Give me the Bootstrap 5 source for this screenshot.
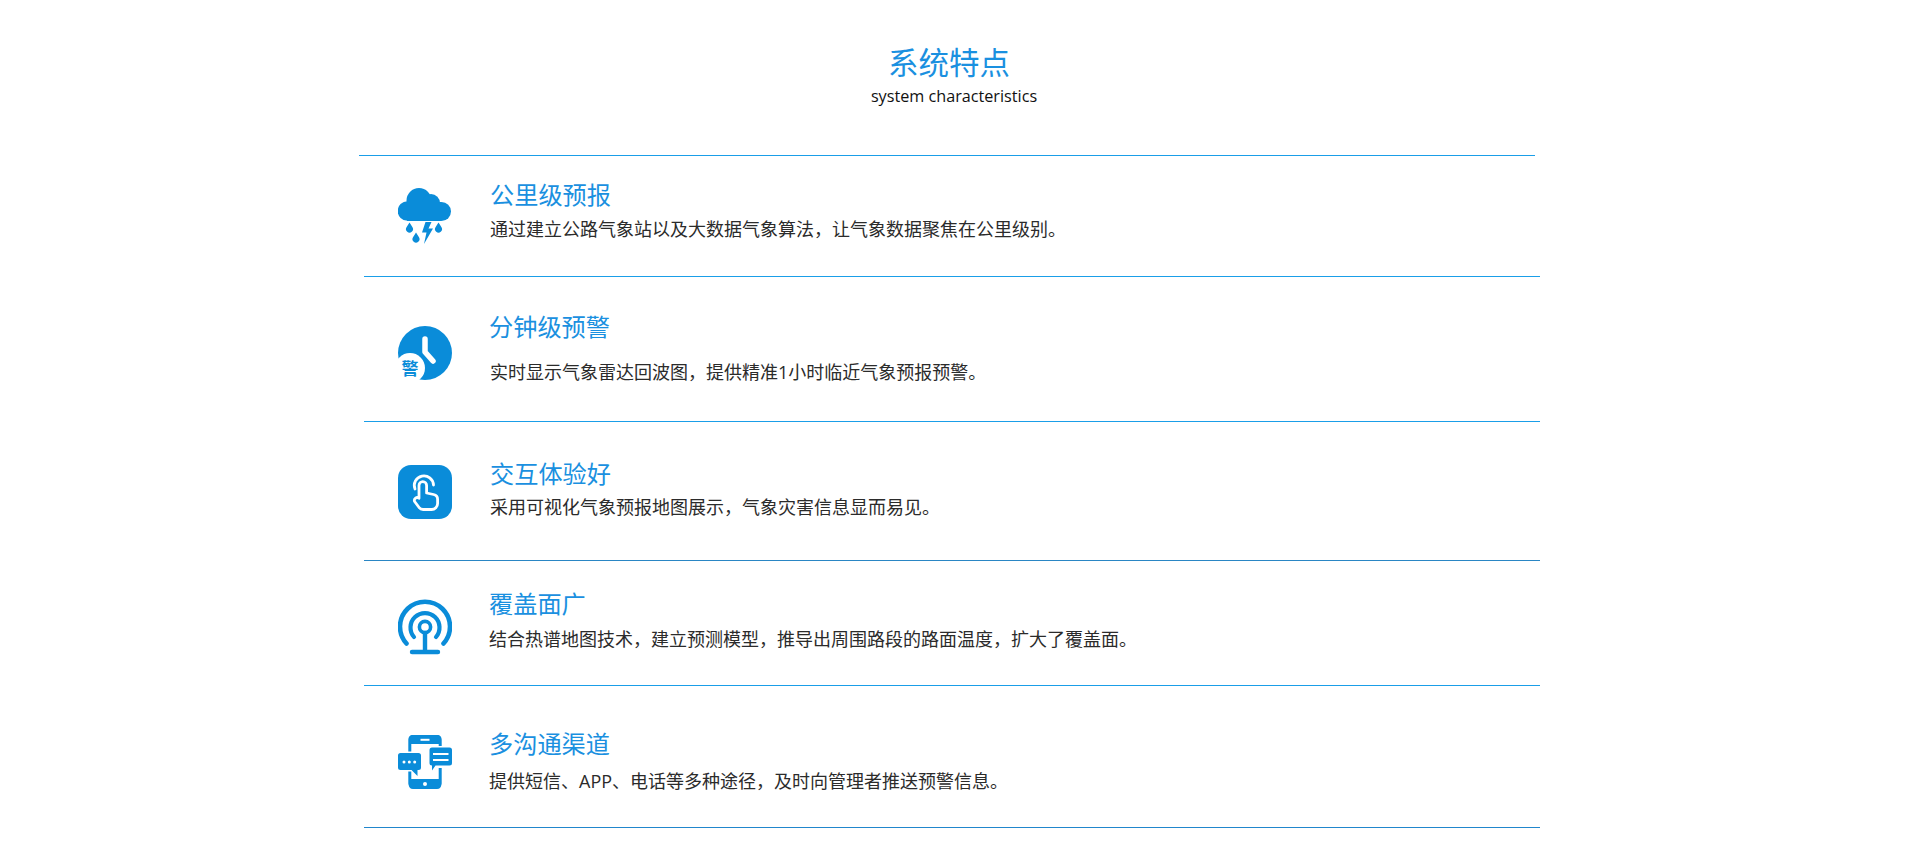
<!DOCTYPE html>
<html lang="zh-CN">
<head>
<meta charset="utf-8">
<title>系统特点</title>
<link rel="stylesheet" href="https://cdn.jsdelivr.net/npm/bootstrap@5.3.0/dist/css/bootstrap.min.css">
<style>
html,body{background:#fff;overflow:hidden;height:844px}
body{font-family:"Open Sans","Noto Sans CJK SC",sans-serif;color:#333}
.intro{height:155px;padding-top:43px;width:1176px;margin-left:366px}
.intro-title{font-size:30.5px;line-height:38px;font-weight:400;color:#1a90e0;margin:0;padding-right:10px}
.intro-sub{font-size:16.2px;line-height:22px;color:#111;margin:4px 0 0}
.feature-list{width:1176px;margin-left:364px}
.top-rule{width:1176px;margin-left:-5px;height:1px;background:#1a9ee8}
.feature{border-bottom:1px solid #1a9ee8;width:1176px}
.feature-icon{width:54px;flex:none;margin-left:34px;margin-right:38px;color:#0a8cd9}
.feature-icon svg{display:block;width:54px}
.feature-title{font-size:24.2px;line-height:32px;font-weight:400;color:#1a90e0;margin:0}
.feature-desc{font-size:18px;line-height:24px;margin:0;color:#2b2b2b;white-space:nowrap}
.f1{height:121px;padding-top:32px}
.f1 .feature-title{margin-top:-9px}.f1 .feature-desc{margin-top:6px}
.f2{height:145px;padding-top:49px}
.f2 .feature-title{margin-top:-15px;margin-left:-1px}.f2 .feature-desc{margin-top:17px}
.f3{height:139px;padding-top:43px;border-bottom-color:#2a86c4}
.f3 .feature-title{margin-top:-7px}.f3 .feature-desc{margin-top:5px}
.f4{height:125px;padding-top:38px}
.f4 .feature-title{margin-top:-11px;margin-left:-1px}.f4 .feature-desc{margin-top:7px;margin-left:-1px}
.f5{height:142px;padding-top:49px;border-bottom-color:#2186cc}
.f5 .feature-title{margin-top:-7px;margin-left:-1px}.f5 .feature-desc{margin-top:9px;margin-left:-1px}
</style>
</head>
<body>
<header class="intro text-center">
  <h1 class="intro-title">系统特点</h1>
  <p class="intro-sub">system characteristics</p>
</header>
<main class="feature-list">
  <div class="top-rule"></div>
  <section class="feature f1 d-flex align-items-start">
    <div class="feature-icon">
      <svg viewBox="0 0 54 56" height="56" fill="currentColor" aria-hidden="true">
        <circle cx="9.5" cy="23" r="9.8"/><circle cx="21" cy="12.500" r="12.500"/><circle cx="33" cy="15" r="9"/><circle cx="43.500" cy="23.500" r="9.500"/>
        <rect x="9" y="14" width="34" height="19"/>
        <path d="M11.500 34.500l3 4.800a3.500 3.500 0 1 1-6 0z"/><path d="M40.500 34.500l3 4.800a3.500 3.500 0 1 1-6 0z"/><path d="M18 44.500l3 4.800a3.500 3.500 0 1 1-6 0z"/>
        <path d="M27.500 34h6l-3 6.500h4.500L26 56l2.500-11.500H24z"/>
      </svg>
    </div>
    <div>
      <h2 class="feature-title">公里级预报</h2>
      <p class="feature-desc">通过建立公路气象站以及大数据气象算法，让气象数据聚焦在公里级别。</p>
    </div>
  </section>
  <section class="feature f2 d-flex align-items-start">
    <div class="feature-icon">
      <svg viewBox="0 0 54 54" height="54" aria-hidden="true">
        <circle cx="27" cy="27" r="27" fill="currentColor"/>
        <path d="M27 13v13l8 9" fill="none" stroke="#fff" stroke-width="5.500" stroke-linecap="round" stroke-linejoin="round"/>
        <circle cx="12" cy="42" r="15" fill="#fff"/>
        <text x="12" y="48.500" text-anchor="middle" font-size="17" font-weight="700" fill="currentColor" font-family="'Noto Sans CJK SC',sans-serif">警</text>
      </svg>
    </div>
    <div>
      <h2 class="feature-title">分钟级预警</h2>
      <p class="feature-desc">实时显示气象雷达回波图，提供精准1小时临近气象预报预警。</p>
    </div>
  </section>
  <section class="feature f3 d-flex align-items-start">
    <div class="feature-icon">
      <svg viewBox="0 0 54 54" height="54" aria-hidden="true">
        <rect width="54" height="54" rx="13" fill="currentColor"/>
        <g fill="none" stroke="#fff" stroke-width="2.800" stroke-linecap="round" stroke-linejoin="round">
          <path d="M17 24a9.600 9.600 0 1 1 18.500-4"/>
          <path d="M21 33V20.500a3.800 3.800 0 0 1 7.600 0V28l7 1.500a5 5 0 0 1 4 5v4a6 6 0 0 1-6 6h-8.500a5 5 0 0 1-4-2l-4.500-6a2.800 2.800 0 0 1 4.400-3.200z"/>
        </g>
      </svg>
    </div>
    <div>
      <h2 class="feature-title">交互体验好</h2>
      <p class="feature-desc">采用可视化气象预报地图展示，气象灾害信息显而易见。</p>
    </div>
  </section>
  <section class="feature f4 d-flex align-items-start">
    <div class="feature-icon">
      <svg viewBox="0 0 54 56" height="56" aria-hidden="true">
        <g fill="none" stroke="currentColor" stroke-linecap="round">
          <path d="M8.500 44.500a25 25 0 1 1 37 0" stroke-width="4.600"/>
          <path d="M16 38a14.500 14.500 0 1 1 22 0" stroke-width="4.200"/>
          <circle cx="27" cy="28" r="5.600" stroke-width="3.600"/>
          <path d="M27 34v18M14 53h26" stroke-width="4.400"/>
        </g>
      </svg>
    </div>
    <div>
      <h2 class="feature-title">覆盖面广</h2>
      <p class="feature-desc">结合热谱地图技术，建立预测模型，推导出周围路段的路面温度，扩大了覆盖面。</p>
    </div>
  </section>
  <section class="feature f5 d-flex align-items-start">
    <div class="feature-icon">
      <svg viewBox="0 0 54 54" height="54" aria-hidden="true">
        <rect x="11.800" y="1.500" width="30.400" height="50" rx="3" fill="none" stroke="currentColor" stroke-width="3"/>
        <path d="M11 4a4 4 0 0 1 4-4h24a4 4 0 0 1 4 4v5H11zM11 44h32v6a4 4 0 0 1-4 4H15a4 4 0 0 1-4-4z" fill="currentColor"/>
        <rect x="22.500" y="3.800" width="9" height="2" fill="#fff"/>
        <circle cx="27" cy="49" r="2" fill="#fff"/>
        <path d="M2 16.500h20a2.500 2.500 0 0 1 2.500 2.500v15a2.500 2.500 0 0 1-2.500 2.500h-1.500V43l-6-6.500H2A3 3 0 0 1-1 34V19a3 3 0 0 1 3-2.500z" fill="#fff"/>
        <path d="M2.500 18h18a2.500 2.500 0 0 1 2.500 2.500v12a2.500 2.500 0 0 1-2.500 2.500h-1v6l-6-6h-11A2.500 2.500 0 0 1 0 32.500v-12A2.500 2.500 0 0 1 2.500 18z" fill="currentColor"/>
        <circle cx="6" cy="27" r="1.500" fill="#fff"/><circle cx="11.300" cy="27" r="1.500" fill="#fff"/><circle cx="16.700" cy="27" r="1.500" fill="#fff"/>
        <path d="M32 11h21v22H38l-5 5v-5h-3V11z" fill="#fff"/>
        <path d="M34 12.500h17.500a2.500 2.500 0 0 1 2.500 2.500v13a2.500 2.500 0 0 1-2.500 2.500H37.500l-3.500 5v-5a2.500 2.500 0 0 1-2.500-2.500V15a2.500 2.500 0 0 1 2.500-2.500z" fill="currentColor"/>
        <path d="M35 19h15.500M35 25h15.500" stroke="#fff" stroke-width="2"/>
      </svg>
    </div>
    <div>
      <h2 class="feature-title">多沟通渠道</h2>
      <p class="feature-desc">提供短信、APP、电话等多种途径，及时向管理者推送预警信息。</p>
    </div>
  </section>
</main>
<script src="https://cdn.jsdelivr.net/npm/bootstrap@5.3.0/dist/js/bootstrap.bundle.min.js"></script>
</body>
</html>
